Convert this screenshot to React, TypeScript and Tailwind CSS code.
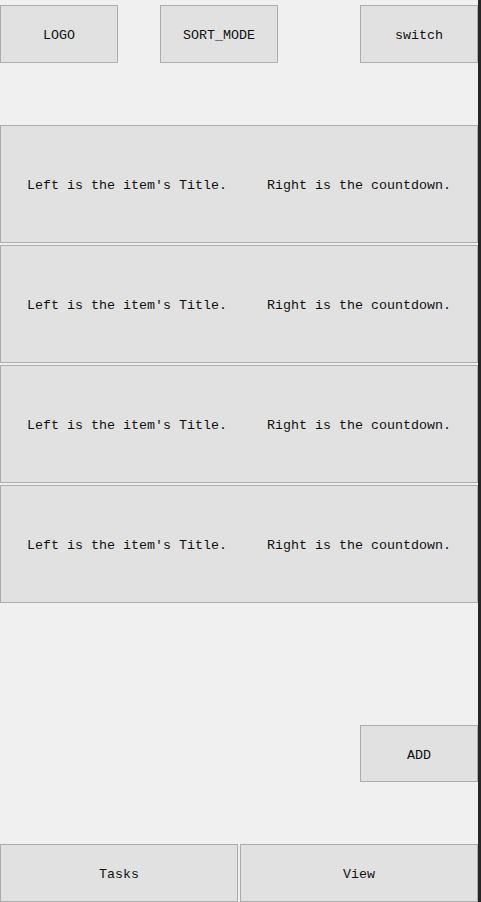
const btn =
  'flex items-center justify-center pt-[4px] bg-[#e1e1e1] border border-[#adadad] text-[#111]'

const rows = [1, 2, 3, 4]

export default function App() {
  return (
    <div className="flex h-[902px] w-[481px] overflow-hidden font-['Liberation_Mono',monospace] text-[13.33px]">
      <div className="flex w-[478px] flex-col bg-[#f0f0f0]">
        {/* header */}
        <div className="mt-[5px] flex h-[58px]">
          <div className={`${btn} w-[118px]`}>LOGO</div>
          <div className={`${btn} ml-[42px] w-[118px]`}>SORT_MODE</div>
          <div className={`${btn} ml-auto w-[118px]`}>switch</div>
        </div>

        {/* items */}
        <div className="mt-[62px] flex flex-col gap-[2px]">
          {rows.map((r) => (
            <div key={r} className={`${btn} h-[118px] whitespace-pre`}>
              {"Left is the item's Title.     Right is the countdown."}
            </div>
          ))}
        </div>

        <div className="mt-[122px] flex h-[58px] justify-end">
          <div className={`${btn} w-[118px]`}>ADD</div>
        </div>

        {/* bottom tabs */}
        <div className="mt-[62px] flex h-[58px] gap-[2px]">
          <div className={`${btn} flex-1`}>Tasks</div>
          <div className={`${btn} flex-1`}>View</div>
        </div>
      </div>
      <div className="flex-1 bg-[#262626]" />
    </div>
  )
}
